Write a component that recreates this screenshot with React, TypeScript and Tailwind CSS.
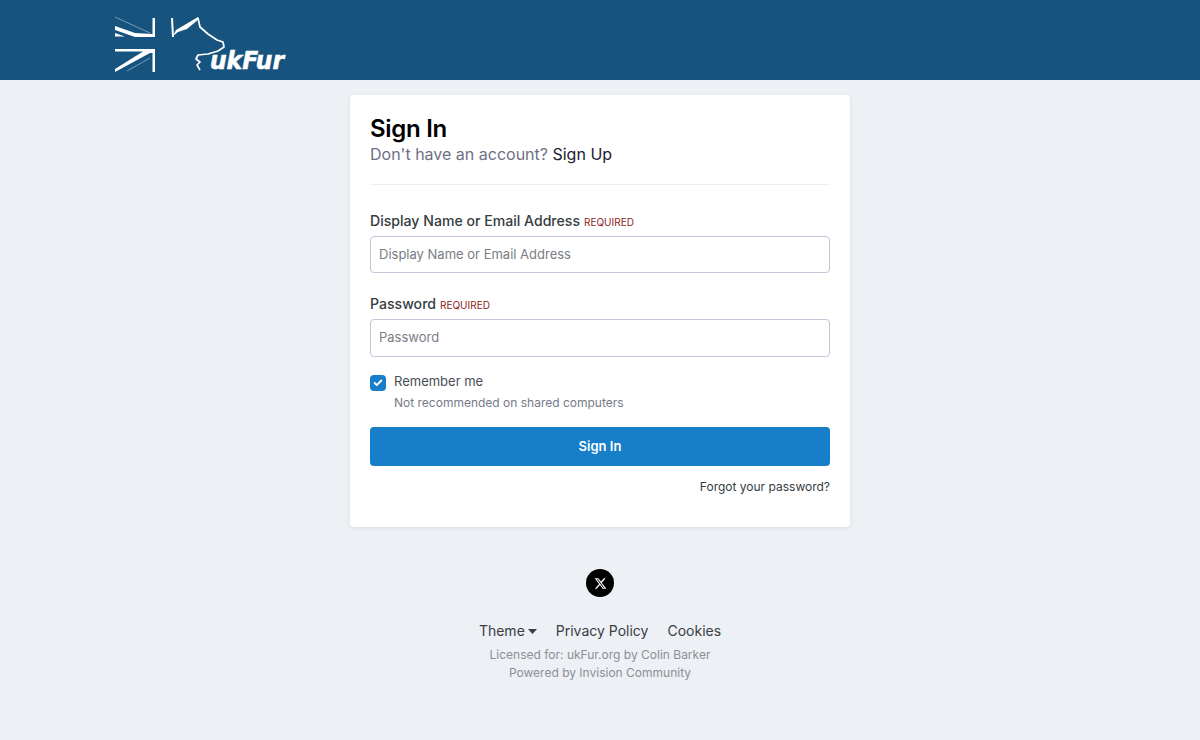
import { Check } from 'lucide-react';

function Logo() {
    // viewBox uses the page's own pixel coordinates, easier to trace against
    return (
        <svg width="174" height="60" viewBox="114 15 174 60" fill="none" className="block">
            {/* Flag, top half */}
            <path d="M115 26 L135 33 L152.5 34 L152.5 18 L155 18 L155 37 L135 37 L115 30 Z" fill="#fff" />
            <path d="M115 33 L125 36.5 L115 36.5 Z" fill="#fff" />
            <path d="M115 17 L150 33" stroke="#fff" strokeWidth="0.6" opacity="0.7" />
            {/* Flag, bottom half */}
            <path d="M115 49 L155 49 L155 72 L152.5 72 L152.5 53 L150 53 L115 72 L115 69 L143 51.5 L115 51.5 Z" fill="#fff" />
            <path d="M127 71 L150 58" stroke="#fff" strokeWidth="0.6" opacity="0.7" />
            {/* Cat */}
            <path d="M171 18 L173 18 L174 37 L172 37 Z" fill="#fff" />
            <path d="M173 36 L176 30 L198 17 L199 19 L187 29 L178 32 Z" fill="#fff" />
            <path
                d="M198 18 L200 27 L208 34 L217 40 L223 42 L224 47 L218 51 L208 54 L198 55 L196 59 L200 62 L197 65 L200 70"
                stroke="#fff"
                strokeWidth="1.7"
                strokeLinejoin="round"
            />
            <text
                x="210"
                y="69"
                fill="#fff"
                stroke="#fff"
                strokeWidth="0.6"
                fontSize="25"
                fontWeight="700"
                fontStyle="italic"
                fontFamily="'DejaVu Sans', sans-serif"
                textLength="74"
                lengthAdjust="spacingAndGlyphs"
            >
                ukFur
            </text>
        </svg>
    );
}

function Field({ label, placeholder, height }: { label: string; placeholder: string; height: string }) {
    return (
        <div>
            <div className="flex items-baseline gap-1 text-[14.1px] leading-[20px] font-medium text-[#353c41]">
                {label}
                <span className="text-[10px] font-normal text-[#8c1a1a]">REQUIRED</span>
            </div>
            <div
                className={`mt-[4px] flex items-center rounded-[4px] border border-[#c3c6d4] bg-white px-2 text-[13px] text-[#7a7d85] ${height}`}
            >
                {placeholder}
            </div>
        </div>
    );
}

export default function App() {
    return (
        <div className="min-h-[740px] bg-[#edf0f4] font-['Inter',sans-serif]">
            <header className="h-20 bg-[#16547f]">
                <div className="pl-[114px] pt-[15px]">
                    <Logo />
                </div>
            </header>

            <main className="mx-auto mt-[15px] h-[432px] w-[500px] rounded-[4px] bg-white p-5 shadow-[0_1px_4px_rgba(0,0,0,0.08)]">
                <h1 className="text-[24px] leading-[28px] font-semibold tracking-[-0.3px] text-black">Sign In</h1>
                <p className="text-[16px] leading-[22px] text-[#6e7086]">
                    Don't have an account? <span className="text-[#1c2030]">Sign Up</span>
                </p>
                <div className="mt-[19px] mb-[26px] border-t border-[#eceef2]" />

                <div className="flex flex-col gap-[21px]">
                    <Field label="Display Name or Email Address" placeholder="Display Name or Email Address" height="h-[37px]" />
                    <Field label="Password" placeholder="Password" height="h-[38px]" />
                </div>

                <div className="mt-[16px] flex gap-2">
                    <div className="mt-[2px] flex h-4 w-4 items-center justify-center rounded-[4px] bg-[#177ec9]">
                        <Check size={10} strokeWidth={4.5} color="#fff" />
                    </div>
                    <div className="text-[13px] text-[#4a4d57]">
                        <div className="leading-[17px]">Remember me</div>
                        <div className="mt-[4px] text-[12px] leading-[17px] text-[#777a88]">Not recommended on shared computers</div>
                    </div>
                </div>

                <button className="mt-[16px] h-[39px] w-full rounded-[4px] bg-[#177ec9] text-[13px] font-semibold text-white">
                    Sign In
                </button>

                <div className="mt-[12px] text-right text-[12px] leading-[17px] text-[#353c41]">Forgot your password?</div>
            </main>

            <footer className="mt-[42px] flex flex-col items-center">
                <div className="flex h-7 w-7 items-center justify-center rounded-full bg-black">
                    <svg width="13" height="13" viewBox="0 0 24 24" fill="#fff">
                        <path d="M18.244 2.25h3.308l-7.227 8.26 8.502 11.24H16.17l-5.214-6.817L4.99 21.75H1.68l7.73-8.835L1.254 2.25H8.08l4.713 6.231zm-1.161 17.52h1.833L7.084 4.126H5.117z" />
                    </svg>
                </div>
                <nav className="mt-[24px] flex items-center gap-[19px] text-[14px] leading-[20px] text-[#3a3d45]">
                    <span className="flex items-center gap-[3px]">
                        Theme
                        <svg width="9" height="5" viewBox="0 0 9 5" fill="#3a3d45"><path d="M0 0h9L4.5 5z" /></svg>
                    </span>
                    <span>Privacy Policy</span>
                    <span>Cookies</span>
                </nav>
                <div className="mt-[5px] text-center text-[12px] leading-[18px] text-[#8c8f96]">
                    <div>Licensed for: ukFur.org by Colin Barker</div>
                    <div>Powered by Invision Community</div>
                </div>
            </footer>
        </div>
    );
}
